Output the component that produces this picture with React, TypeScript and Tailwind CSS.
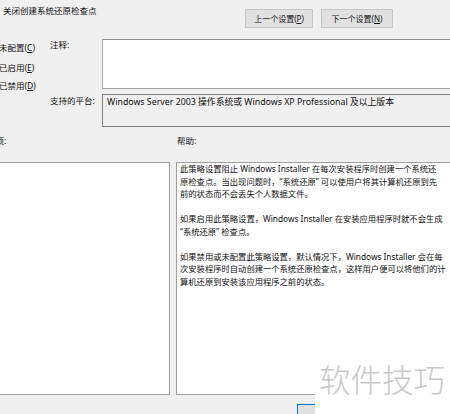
import React from "react";

const font = "font-['Segoe_UI','Noto_Sans','Noto_Sans_CJK_SC',sans-serif]";

function U({ c }: { c: string }) {
  return <span className="underline">{c}</span>;
}

const helpLines: string[] = [
  "此策略设置阻止 Windows Installer 在每次安装程序时创建一个系统还",
  "原检查点。当出现问题时，“系统还原” 可以使用户将其计算机还原到先",
  "前的状态而不会丢失个人数据文件。",
  "",
  "如果启用此策略设置，Windows Installer 在安装应用程序时就不会生成",
  "“系统还原” 检查点。",
  "",
  "如果禁用或未配置此策略设置，默认情况下，Windows Installer 会在每",
  "次安装程序时自动创建一个系统还原检查点，这样用户便可以将他们的计",
  "算机还原到安装该应用程序之前的状态。",
];

export default function App() {
  return (
    <div className={`relative w-[450px] h-[414px] overflow-hidden bg-[#f0f0f0] text-[#111] ${font}`}>
      {/* header */}
      <div className="flex h-[39px] items-start">
        <div className="pl-[3px] pt-[5px] text-[8.5px] leading-[12px] whitespace-nowrap">关闭创建系统还原检查点</div>
        <div className="ml-auto mr-[57px] mt-[9px] flex gap-[8px]">
          <div className="flex h-[19px] w-[68px] items-center justify-center border border-[#c6c6c6] bg-[#e1e1e1] text-[8px] whitespace-nowrap">
            上一个设置(<U c="P" />)
          </div>
          <div className="flex h-[19px] w-[72px] items-center justify-center border border-[#c6c6c6] bg-[#e1e1e1] text-[8px] whitespace-nowrap">
            下一个设置(<U c="N" />)
          </div>
        </div>
      </div>

      {/* settings rows */}
      <div className="flex">
        <div className="w-[52px] shrink-0 flex flex-col text-[8.5px] leading-[12px] whitespace-nowrap -ml-[1px]">
          <div className="mt-[3px]">未配置(<U c="C" />)</div>
          <div className="mt-[8px]">已启用(<U c="E" />)</div>
          <div className="mt-[6px]">已禁用(<U c="D" />)</div>
        </div>
        <div className="flex flex-col">
          <div className="flex h-[50px]">
            <div className="w-[52px] shrink-0 text-[8.5px] leading-[12px] -ml-[1px]">注释:</div>
            <div className="w-[360px] h-[50px] border border-[#a6a6a6] border-t-[#8c8c8c] bg-white"></div>
          </div>
          <div className="flex mt-[5px] h-[33px]">
            <div className="w-[52px] shrink-0 pt-[1px] text-[8.5px] leading-[12px] whitespace-nowrap -ml-[1px]">支持的平台:</div>
            <div className="w-[360px] h-[33px] border border-[#7f7f7f] border-r-0 bg-[#f0f0f0] pl-[4px] pt-[1px] text-[8.8px] leading-[12px] whitespace-nowrap">
              Windows Server 2003 操作系统或 Windows XP Professional 及以上版本
            </div>
          </div>
        </div>
      </div>

      {/* options / help columns */}
      <div className="flex mt-[8px]">
        <div className="flex w-[170px] shrink-0 flex-col">
          <div className="h-[27px] overflow-hidden whitespace-nowrap text-[8.5px] leading-[12px]">
            <span className="inline-block -ml-[13px]">选项:</span>
          </div>
          <div className="h-[233px] -ml-[1px] w-[171px] border border-[#a0a0a0] bg-white"></div>
        </div>
        <div className="ml-[6px] flex w-[320px] shrink-0 flex-col">
          <div className="h-[27px] pl-[1px] text-[8.5px] leading-[12px]">帮助:</div>
          <div className="h-[233px] border border-[#a0a0a0] border-r-0 bg-white pl-[3px] text-[8.3px] leading-[12.5px] whitespace-nowrap">
            {helpLines.map((l, i) => (
              <div key={i} className="h-[12.5px]">{l}</div>
            ))}
          </div>
        </div>
      </div>

      {/* bottom strip */}
      <div className="flex h-[20px]">
        <div className="ml-[297px] mt-[9px] h-[20px] w-[70px] border border-[#0078d7] bg-[#e1e1e1]"></div>
      </div>

      {/* watermark */}
      <div className="absolute left-[315px] top-[357px] w-[135px] h-[57px] bg-white">
        <div className="pl-[4px] pt-[3px] text-[31.5px] leading-[36px] text-[#c9c9c9] whitespace-nowrap font-['Noto_Sans_CJK_SC',sans-serif] font-light">
          软件技巧
        </div>
      </div>
    </div>
  );
}
